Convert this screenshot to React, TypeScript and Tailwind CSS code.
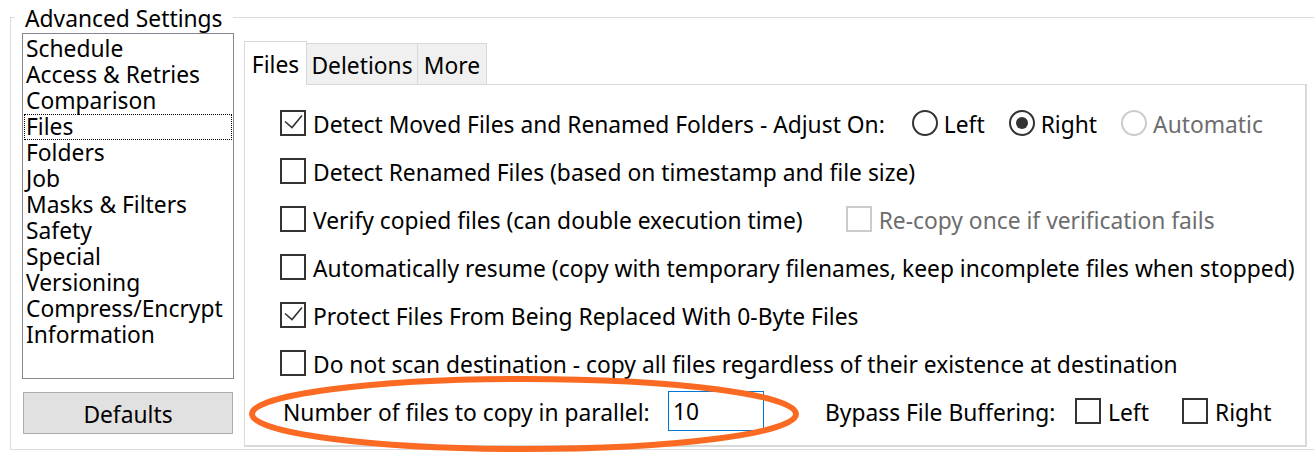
import React from 'react';

const listItems = [
  'Schedule',
  'Access & Retries',
  'Comparison',
  'Files',
  'Folders',
  'Job',
  'Masks & Filters',
  'Safety',
  'Special',
  'Versioning',
  'Compress/Encrypt',
  'Information',
];

const CheckBox: React.FC<{ checked?: boolean; disabled?: boolean }> = ({ checked, disabled }) => (
  <span
    className={`flex h-[26px] w-[26px] shrink-0 items-center justify-center border-2 bg-white ${
      disabled ? 'border-[#cccccc]' : 'border-[#333333]'
    }`}
  >
    {checked && (
      <svg width="22" height="22" viewBox="0 0 22 22">
        <path d="M3 9.5 L10 15.5 L20 3.5" fill="none" stroke="#333333" strokeWidth="1.6" />
      </svg>
    )}
  </span>
);

const Radio: React.FC<{ checked?: boolean; disabled?: boolean }> = ({ checked, disabled }) => (
  <span
    className={`flex h-[26px] w-[26px] shrink-0 items-center justify-center rounded-full border-2 bg-white ${
      disabled ? 'border-[#cccccc]' : 'border-[#333333]'
    }`}
  >
    {checked && <span className="h-[12px] w-[12px] rounded-full bg-[#333333]" />}
  </span>
);

const Row: React.FC<{ children: React.ReactNode }> = ({ children }) => (
  <div className="flex h-[48px] items-center whitespace-nowrap">{children}</div>
);

const Label: React.FC<{ className?: string; children: React.ReactNode }> = ({ className = '', children }) => (
  <span className={`pt-[3px] ${className}`}>{children}</span>
);

const App: React.FC = () => {
  return (
    <div className="relative h-[454px] w-[1314px] overflow-hidden bg-white pl-[10px] pt-[2px] font-['Noto_Sans',sans-serif] text-[22.8px] leading-[26px] text-black">
      <fieldset className="h-[448px] w-[1300px] border border-[#dcdcdc] px-[11px]">
        <legend className="-ml-[7px] px-[10px] pt-[4px]">Advanced Settings</legend>

        <div className="flex">
          {/* left column */}
          <div className="mt-[1px] w-[212px]">
            <div className="h-[346px] border border-[#828790] bg-white pt-[2px]">
              {listItems.map((item) => (
                <div
                  key={item}
                  className={`mx-[1px] h-[26px] pl-[2px] leading-[26px] ${
                    item === 'Files' ? 'outline-1 -outline-offset-1 outline-dotted outline-black' : ''
                  }`}
                >
                  {item}
                </div>
              ))}
            </div>
            <button className="ml-[1px] mt-[13px] flex h-[42px] w-[210px] items-center justify-center border border-[#adadad] bg-[#e1e1e1] pt-[3px]">
              Defaults
            </button>
          </div>

          {/* tabs */}
          <div className="ml-[10px] mt-[9px] w-[1063px]">
            <div className="flex h-[43px] items-end">
              <div className="relative z-10 -mb-px flex h-[44px] w-[63px] items-center justify-center border border-b-0 border-[#d9d9d9] bg-white pt-[3px]">
                Files
              </div>
              <div className="-ml-px flex h-[41px] w-[112px] items-center justify-center border border-b-0 border-[#d9d9d9] bg-[#f0f0f0] pt-[4px]">
                Deletions
              </div>
              <div className="-ml-px flex h-[41px] w-[70px] items-center justify-center border border-b-0 border-[#d9d9d9] bg-[#f0f0f0] pt-[4px]">
                More
              </div>
            </div>
            <div className="h-[363px] border border-r-2 border-b-2 border-[#d9d9d9] bg-white pl-[35px] pt-[14px]">
              <Row>
                <CheckBox checked />
                <Label className="ml-[7px]">Detect Moved Files and Renamed Folders - Adjust On:</Label>
                <span className="ml-[27px] flex items-center">
                  <Radio />
                  <Label className="ml-[6px]">Left</Label>
                </span>
                <span className="ml-[24px] flex items-center">
                  <Radio checked />
                  <Label className="ml-[6px]">Right</Label>
                </span>
                <span className="ml-[24px] flex items-center">
                  <Radio disabled />
                  <Label className="ml-[6px] text-[#6d6d6d]">Automatic</Label>
                </span>
              </Row>
              <Row>
                <CheckBox />
                <Label className="ml-[7px]">Detect Renamed Files (based on timestamp and file size)</Label>
              </Row>
              <Row>
                <CheckBox />
                <Label className="ml-[7px]">Verify copied files (can double execution time)</Label>
                <span className="ml-[43px] flex items-center">
                  <CheckBox disabled />
                  <Label className="ml-[7px] text-[#6d6d6d]">Re-copy once if verification fails</Label>
                </span>
              </Row>
              <Row>
                <CheckBox />
                <Label className="ml-[7px]">
                  Automatically resume (copy with temporary filenames, keep incomplete files when stopped)
                </Label>
              </Row>
              <Row>
                <CheckBox checked />
                <Label className="ml-[7px]">Protect Files From Being Replaced With 0-Byte Files</Label>
              </Row>
              <Row>
                <CheckBox />
                <Label className="ml-[7px]">
                  Do not scan destination - copy all files regardless of their existence at destination
                </Label>
              </Row>
              <Row>
                <Label className="ml-[3px] w-[372px]">Number of files to copy in parallel:</Label>
                <span className="ml-[13px] flex h-[40px] w-[96px] items-center border border-[#0078d7] pl-[4px] pt-[2px]">10</span>
                <Label className="ml-[61px] w-[227px]">Bypass File Buffering:</Label>
                <span className="ml-[23px] flex items-center">
                  <CheckBox />
                  <Label className="ml-[7px] w-[74px]">Left</Label>
                </span>
                <span className="flex items-center">
                  <CheckBox />
                  <Label className="ml-[7px]">Right</Label>
                </span>
              </Row>
            </div>
          </div>
        </div>
      </fieldset>

      {/* annotation */}
      <svg className="pointer-events-none absolute left-0 top-0" width="1314" height="454">
        <ellipse cx="524" cy="414" rx="272" ry="35" fill="none" stroke="#fb6a22" strokeWidth="6" />
      </svg>
    </div>
  );
};

export default App;
